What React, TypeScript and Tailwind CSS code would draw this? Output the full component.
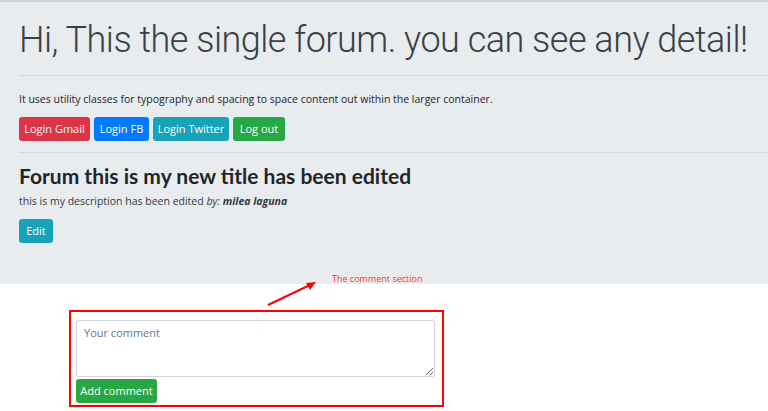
export default function App() {
  return (
    <div className="relative min-h-[411px] bg-white font-['Open_Sans',sans-serif] text-[#212529]">
      <div className="border-t-2 border-[#d0d2d5] bg-[#e9ecef] pl-[19px] pt-[15px] pb-[41px]">
        <h1 className="font-['Roboto',sans-serif] text-[36px] font-light leading-[46px] tracking-[-0.5px] text-[#3a3f44] whitespace-nowrap">
          Hi, This the single forum. you can see any detail!
        </h1>
        <hr className="mt-[12px] border-t border-[#d6d9dc]" />
        <p className="mt-[15px] text-[10.5px] leading-[16px]">
          It uses utility classes for typography and spacing to space content out within the larger container.
        </p>
        <div className="mt-[10px] flex gap-[4px]">
          <button className="h-[24px] w-[71px] rounded-[3px] bg-[#dc3545] text-[11px] text-white">Login Gmail</button>
          <button className="h-[24px] w-[55px] rounded-[3px] bg-[#007bff] text-[11px] text-white">Login FB</button>
          <button className="h-[24px] w-[76px] rounded-[3px] bg-[#17a2b8] text-[11px] text-white">Login Twitter</button>
          <button className="h-[24px] w-[52px] rounded-[3px] bg-[#28a745] text-[11px] text-white">Log out</button>
        </div>
        <hr className="mt-[11px] border-t border-[#d6d9dc]" />
        <h3 className="mt-[9px] font-['Lato',sans-serif] text-[21px] font-bold leading-[28px]">Forum this is my new title has been edited</h3>
        <p className="mt-[3px] text-[10.5px] leading-[16px] text-[#343a40]">
          this is my description has been edited <i>by:</i> <b><i>milea laguna</i></b>
        </p>
        <button className="mt-[10px] h-[24px] w-[34px] rounded-[3px] bg-[#17a2b8] text-[11px] text-white">Edit</button>
      </div>

      <div className="ml-[69px] mt-[26px] w-[375px] border-2 border-[#ff0000] pl-[5px] pr-[7px] pt-[8px] pb-[2px]">
        <textarea
          placeholder="Your comment"
          className="block h-[57px] w-full resize-y rounded-[3px] border border-[#ced4da] bg-white px-[7px] py-[4px] text-[11px] placeholder:text-[#6c757d]"
        />
        <button className="mt-[2px] h-[24px] w-[81px] rounded-[3px] bg-[#28a745] text-[11px] text-white">Add comment</button>
      </div>

      <span className="absolute left-[332px] top-[272px] text-[9px] text-[#ff3333]">The comment section</span>
      <svg className="absolute left-[260px] top-[276px]" width="64" height="36" viewBox="0 0 64 36">
        <line x1="8" y1="29" x2="50" y2="9" stroke="#ff0000" strokeWidth="2" />
        <polygon points="56,6 46,7 50,14" fill="#ff0000" />
      </svg>
    </div>
  );
}
